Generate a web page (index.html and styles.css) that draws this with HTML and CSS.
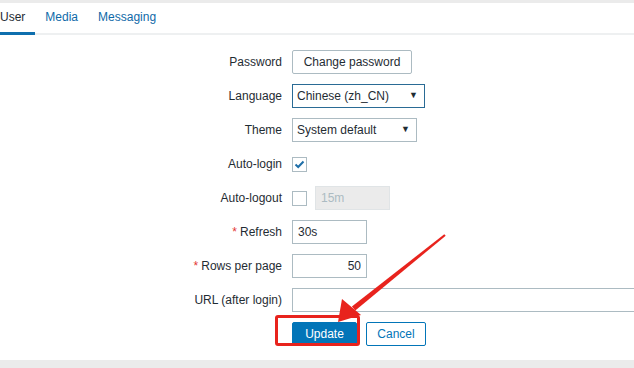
FILE: index.html
```
<!DOCTYPE html>
<html lang="en">
<head>
    <meta charset="UTF-8">
    <meta name="viewport" content="width=device-width, initial-scale=1.0">
    <title>User profile</title>
    <link rel="stylesheet" href="styles.css">
</head>
<body>
    <div class="page">
        <div class="strip"></div>

        <ul class="tabs">
            <li class="tab active">User</li>
            <li class="tab">Media</li>
            <li class="tab">Messaging</li>
        </ul>

        <form class="form" onsubmit="return false">
            <label class="label">Password</label>
            <div class="field"><button type="button" class="btn btn-alt">Change password</button></div>

            <label class="label" for="lang">Language</label>
            <div class="field">
                <span class="select select-lang focused">
                    <select id="lang">
                        <option>Chinese (zh_CN)</option>
                    </select>
                </span>
            </div>

            <label class="label" for="theme">Theme</label>
            <div class="field">
                <span class="select select-theme">
                    <select id="theme">
                        <option>System default</option>
                    </select>
                </span>
            </div>

            <label class="label">Auto-login</label>
            <div class="field">
                <span class="checkbox">
                    <svg width="11" height="9" viewBox="0 0 11 9"><polyline points="1.5,4.5 4.2,7 9.5,1.5" fill="none" stroke="#1f6fa8" stroke-width="2"/></svg>
                </span>
            </div>

            <label class="label">Auto-logout</label>
            <div class="field">
                <span class="checkbox"></span>
                <input type="text" class="input input-short disabled" value="15m" disabled>
            </div>

            <label class="label" for="refresh"><span class="req">*</span> Refresh</label>
            <div class="field"><input type="text" id="refresh" class="input input-short" value="30s"></div>

            <label class="label" for="rows"><span class="req">*</span> Rows per page</label>
            <div class="field"><input type="text" id="rows" class="input input-short num" value="50"></div>

            <label class="label" for="url">URL (after login)</label>
            <div class="field"><input type="text" id="url" class="input input-wide" value=""></div>

            <div></div>
            <div class="field buttons">
                <button type="submit" class="btn btn-main">Update</button>
                <button type="button" class="btn btn-cancel">Cancel</button>
            </div>
        </form>

        <div class="footer-strip"></div>

        <!-- red annotation drawn over the screenshot -->
        <div class="mark-box"></div>
        <svg class="mark-arrow" width="634" height="368" viewBox="0 0 634 368">
            <polygon points="444.3,234.3 445.7,235.7 355.3,310.6 351.9,306.4" fill="#e8231d"/>
            <polygon points="338,322 342,299 361,315" fill="#e8231d"/>
        </svg>
    </div>
</body>
</html>
```

FILE: styles.css
```
html, body {
    margin: 0;
    padding: 0;
    overflow: hidden;
}

body {
    font-family: "Liberation Sans", Arial, sans-serif;
    font-size: 12px;
    color: #1f2c33;
    background: #fff;
}

.page {
    position: relative;
    width: 634px;
    height: 368px;
    overflow: hidden;
}

.strip {
    height: 3px;
    background: #ebebeb;
}

/* Tabs */
.tabs {
    display: flex;
    list-style: none;
    margin: 0 0 0 -10px;
    padding: 0;
    border-bottom: 2px solid #eef0f1;
}

.tab {
    line-height: 29px;
    padding: 0 10px;
    color: #0f6aa8;
    border-bottom: 3px solid transparent;
    margin-bottom: -2px;
}

.tab.active {
    color: #1f2c33;
    border-bottom-color: #0f6fae;
}

/* Form grid */
.form {
    display: grid;
    grid-template-columns: 282px auto;
    grid-auto-rows: 24px;
    column-gap: 10px;
    row-gap: 10px;
    padding-top: 15px;
    height: 296px;
}

.label {
    display: flex;
    align-items: center;
    justify-content: flex-end;
    white-space: nowrap;
}

.req {
    color: #e33734;
    margin-right: 3px;
}

.field {
    display: flex;
    align-items: center;
    gap: 8px;
    min-width: 0;
}

.btn {
    font-family: inherit;
    font-size: 12px;
    height: 24px;
    padding: 0 8px;
    border-radius: 2px;
    border: 1px solid #acbbc2;
    background: #fff;
    color: #1f2c33;
    white-space: nowrap;
    cursor: pointer;
}

.btn-alt {
    width: 120px;
}

.btn-main {
    width: 65px;
    background: #0275b8;
    border-color: #0275b8;
    color: #fff;
}

.btn-cancel {
    width: 60px;
    border-color: #0275b8;
    color: #0275b8;
}

.buttons {
    gap: 9px;
}

/* Selects */
.select {
    position: relative;
    display: inline-block;
    height: 24px;
}

.select select {
    appearance: none;
    -webkit-appearance: none;
    font-family: inherit;
    font-size: 12px;
    color: #1f2c33;
    height: 24px;
    padding: 0 20px 0 4px;
    border: 1px solid #acbbc2;
    border-radius: 0;
    background: #fff;
    width: 100%;
}

.select::after {
    content: "\25BC";
    position: absolute;
    right: 7px;
    top: 6px;
    font-size: 9px;
    color: #1f2c33;
    pointer-events: none;
}

.select-lang {
    width: 133px;
}

.select-theme {
    width: 125px;
}

.focused select {
    border-color: #2a6b95;
}

/* Checkbox */
.checkbox {
    box-sizing: border-box;
    width: 15px;
    height: 15px;
    border: 1px solid #acbbc2;
    background: #fff;
    display: inline-flex;
    align-items: center;
    justify-content: center;
}

/* Text inputs */
.input {
    box-sizing: border-box;
    font-family: inherit;
    font-size: 12px;
    color: #1f2c33;
    height: 24px;
    padding: 0 5px;
    border: 1px solid #acbbc2;
    background: #fff;
    border-radius: 0;
}

.input-short {
    width: 75px;
}

.input-wide {
    width: 360px;
    flex: none;
}

.num {
    text-align: right;
}

.disabled {
    background: #ebebeb;
    border-color: #e0e4e6;
    color: #acbbc2;
}

.footer-strip {
    height: 10px;
    margin-top: 14px;
    background: #ebebeb;
}

/* Annotation over the form */
.mark-box {
    position: absolute;
    left: 275px;
    top: 315px;
    width: 79px;
    height: 25px;
    border: 3px solid #e8231d;
    border-radius: 3px;
    pointer-events: none;
}

.mark-arrow {
    position: absolute;
    left: 0;
    top: 0;
    pointer-events: none;
}
```
